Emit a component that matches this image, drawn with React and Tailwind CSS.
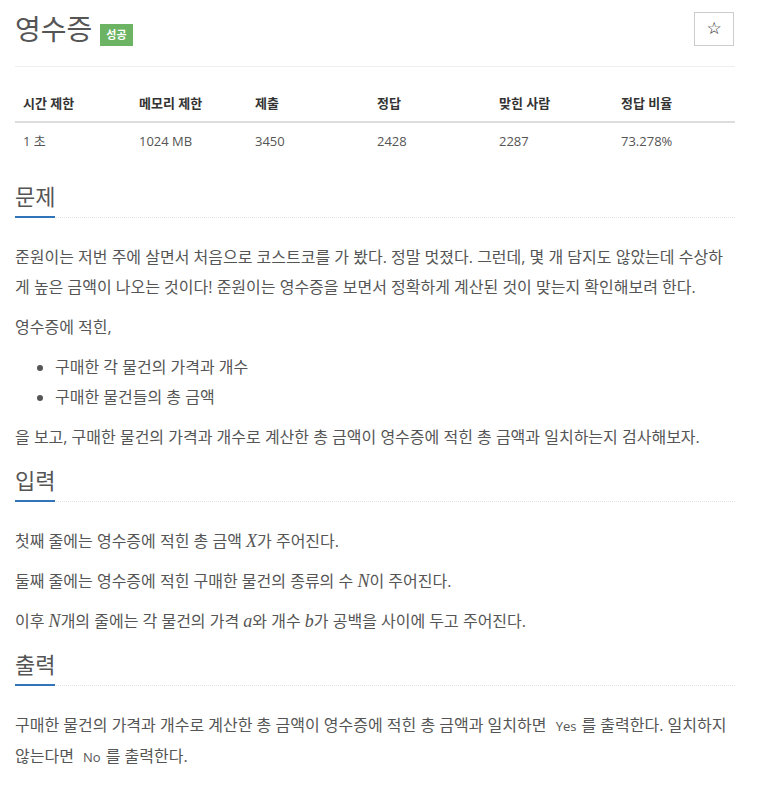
import React from 'react';

const font = { fontFamily: '"Open Sans", "Noto Sans CJK KR", sans-serif' };

const stats = [
  { head: '시간 제한', value: '1 초', w: 'w-[116px]' },
  { head: '메모리 제한', value: '1024 MB', w: 'w-[116px]' },
  { head: '제출', value: '3450', w: 'w-[122px]' },
  { head: '정답', value: '2428', w: 'w-[122px]' },
  { head: '맞힌 사람', value: '2287', w: 'w-[122px]' },
  { head: '정답 비율', value: '73.278%', w: 'w-[122px]' },
];

const M = ({ children }) => (
  <span className="italic text-[18px]" style={{ fontFamily: '"Liberation Serif", serif' }}>
    {children}
  </span>
);

const Code = ({ children }) => (
  <code className="px-[5px] text-[13px] text-[#555]" style={font}>
    {children}
  </code>
);

// section title with blue underline over dotted rule
const Headline = ({ title }) => (
  <div className="flex border-b border-dotted border-[#e4e4e4] mt-[15px] mb-[24px]">
    <h2 className="text-[22px] leading-[26px] pb-[7px] border-b-[2px] border-[#3174ba] -mb-px text-[#555]">
      {title}
    </h2>
  </div>
);

const P = ({ children }) => <p className="text-[16px] leading-[30px] mb-[10px]">{children}</p>;

export default function App() {
  return (
    <div className="w-[750px] px-[15px] bg-white text-[#555]" style={font}>
      {/* title */}
      <div className="flex items-center justify-between pt-[12px] pb-[20px] border-b border-[#eee]">
        <div className="flex items-end">
          <h1 className="text-[28px] leading-[34px] text-[#555]">영수증</h1>
          <span className="ml-[8px] h-[22px] px-[6px] flex items-center bg-[#6cb463] text-white text-[11px] font-bold">
            성공
          </span>
        </div>
        <button className="w-[40px] h-[34px] mr-[1px] border border-[#ccc] flex items-center justify-center text-[#222] text-[17px]"
          style={{ fontFamily: '"DejaVu Sans", sans-serif' }}>
          ☆
        </button>
      </div>

      {/* stats table */}
      <table className="w-[720px] mt-[18px] mb-[24px] text-[13px] border-collapse">
        <thead>
          <tr className="border-b-2 border-[#ddd]">
            {stats.map((s) => (
              <th key={s.head} className={`${s.w} p-[8px] leading-[20px] text-left font-bold text-[#333]`}>{s.head}</th>
            ))}
          </tr>
        </thead>
        <tbody>
          <tr>
            {stats.map((s) => (
              <td key={s.head} className="p-[8px] leading-[20px] text-[#555]">{s.value}</td>
            ))}
          </tr>
        </tbody>
      </table>

      <Headline title="문제" />
      <P>
        준원이는 저번 주에 살면서 처음으로 코스트코를 가 봤다. 정말 멋졌다. 그런데, 몇 개 담지도 않았는데 수상하게 높은 금액이 나오는 것이다! 준원이는 영수증을 보면서 정확하게 계산된 것이 맞는지 확인해보려 한다.
      </P>
      <P>영수증에 적힌,</P>
      <ul className="list-disc pl-[40px] mb-[10px] text-[16px] leading-[30px]">
        <li>구매한 각 물건의 가격과 개수</li>
        <li>구매한 물건들의 총 금액</li>
      </ul>
      <P>을 보고, 구매한 물건의 가격과 개수로 계산한 총 금액이 영수증에 적힌 총 금액과 일치하는지 검사해보자.</P>

      <Headline title="입력" />
      <P>
        첫째 줄에는 영수증에 적힌 총 금액 <M>X</M>가 주어진다.
      </P>
      <P>
        둘째 줄에는 영수증에 적힌 구매한 물건의 종류의 수 <M>N</M>이 주어진다.
      </P>
      <P>
        이후 <M>N</M>개의 줄에는 각 물건의 가격 <M>a</M>와 개수 <M>b</M>가 공백을 사이에 두고 주어진다.
      </P>

      <Headline title="출력" />
      <P>
        구매한 물건의 가격과 개수로 계산한 총 금액이 영수증에 적힌 총 금액과 일치하면 <Code>Yes</Code>를 출력한다. 일치하지 않는다면 <Code>No</Code>를 출력한다.
      </P>
    </div>
  );
}
